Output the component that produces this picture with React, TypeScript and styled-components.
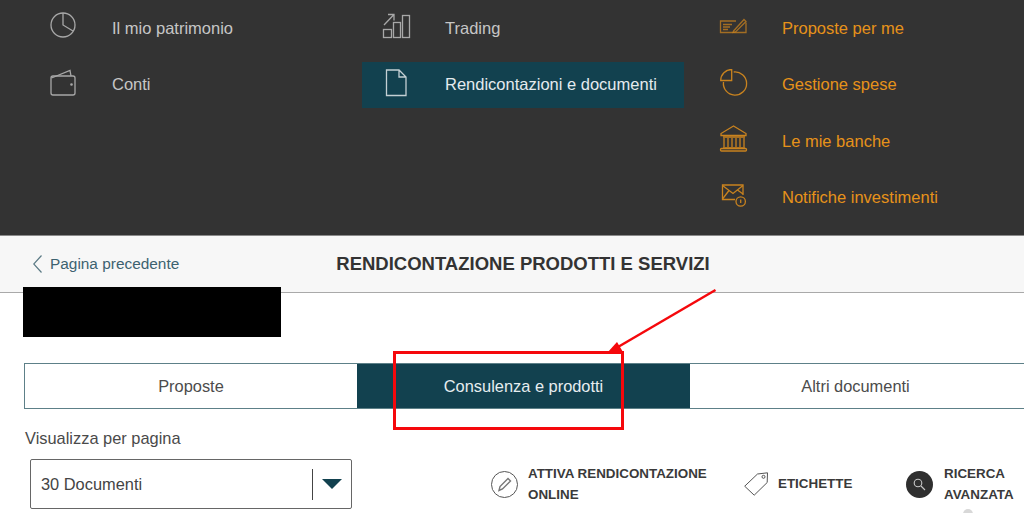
import React from "react";
import styled, { createGlobalStyle } from "styled-components";

const Global = createGlobalStyle`
  html, body { margin: 0; padding: 0; background: #fff; }
  body { font-family: "Liberation Sans", Arial, sans-serif; }
`;

const Page = styled.div`
  position: relative;
  width: 1024px;
  height: 513px;
  overflow: hidden;
  background: #fff;
`;

const MenuPanel = styled.nav`
  display: grid;
  grid-template-columns: 333px 337px 1fr;
  height: 236px;
  box-sizing: border-box;
  padding: 5px 0 0 29px;
  background: #333333;
  border-bottom: 1px solid #8a8a8a;
`;

const MenuColumn = styled.div`
  display: flex;
  flex-direction: column;
  gap: 10.5px;
`;

const MenuRow = styled.a<{ $tone?: "plain" | "active" | "accent" }>`
  display: flex;
  align-items: center;
  gap: 32px;
  width: 322px;
  height: 46px;
  padding-left: 19px;
  box-sizing: border-box;
  font-size: 16.5px;
  color: ${(p) => (p.$tone === "accent" ? "#e6921a" : p.$tone === "active" ? "#e4ebee" : "#c6c6c6")};
  background: ${(p) => (p.$tone === "active" ? "#12414f" : "transparent")};
  svg {
    flex: none;
    display: block;
    fill: none;
    stroke: ${(p) => (p.$tone === "accent" ? "#c9831f" : p.$tone === "active" ? "#c4d0d4" : "#a8a8a8")};
    stroke-width: 1.3;
  }
`;

const SubHeader = styled.header`
  display: grid;
  grid-template-columns: 1fr;
  align-items: center;
  position: relative;
  height: 57px;
  box-sizing: border-box;
  background: #f7f7f7;
  border-bottom: 1px solid #a9a9a9;
`;

const BackLink = styled.a`
  display: flex;
  align-items: center;
  gap: 8px;
  padding-left: 33px;
  font-size: 15.4px;
  color: #3d6270;
  grid-area: 1 / 1;
  svg { display: block; fill: none; stroke: #5b7a85; stroke-width: 1.2; }
`;

const PageTitle = styled.h1`
  grid-area: 1 / 1;
  margin: 0;
  padding-left: 22px;
  text-align: center;
  font-size: 18.5px;
  font-weight: 700;
  color: #333;
`;

const Tabs = styled.div`
  display: grid;
  grid-template-columns: 332px 333px 331px;
  margin: 70px 0 0 24px;
  width: 1003px;
  height: 46px;
  box-sizing: border-box;
  border: 1px solid #5d8088;
`;

const Tab = styled.div<{ $active?: boolean }>`
  display: flex;
  align-items: center;
  justify-content: center;
  font-size: 16.4px;
  color: ${(p) => (p.$active ? "#e6edef" : "#4c4c4c")};
  background: ${(p) => (p.$active ? "#12414f" : "#fff")};
`;

const Controls = styled.section`
  display: flex;
  align-items: flex-end;
  padding-left: 25px;
  margin-top: 20px;
`;

const PageSize = styled.div`
  display: flex;
  flex-direction: column;
  width: 327px;
`;

const FieldLabel = styled.label`
  font-size: 16.4px;
  line-height: 18px;
  color: #4a4a4a;
  margin-bottom: 12px;
`;

const Select = styled.div`
  display: flex;
  align-items: center;
  margin-left: 5px;
  width: 322px;
  height: 50px;
  box-sizing: border-box;
  border: 1px solid #666;
  border-radius: 2px;
  padding-left: 10px;
  font-size: 16.4px;
  color: #444;
`;

const SelectValue = styled.span`
  flex: 1;
`;

const SelectDivider = styled.span`
  width: 1px;
  height: 31px;
  background: #444;
`;

const SelectCaret = styled.span`
  width: 0;
  height: 0;
  margin: 0 9px;
  border-left: 10.5px solid transparent;
  border-right: 10.5px solid transparent;
  border-top: 10px solid #12414f;
`;

const Actions = styled.div`
  display: flex;
  align-items: center;
  height: 50px;
  margin-left: 139px;
`;

const Action = styled.a<{ $width: number; $gap?: number }>`
  display: flex;
  align-items: center;
  gap: ${(p) => p.$gap ?? 10}px;
  width: ${(p) => p.$width}px;
  font-size: 13.4px;
  line-height: 21px;
  font-weight: 700;
  color: #3a3a3a;
  svg { flex: none; display: block; }
  span { margin-top: -1px; }
`;

const Redaction = styled.div`
  position: absolute;
  left: 23px;
  top: 287px;
  width: 258px;
  height: 50px;
  background: #000;
`;

const Highlight = styled.div`
  position: absolute;
  left: 393px;
  top: 351px;
  width: 231px;
  height: 79px;
  box-sizing: border-box;
  border: 3px solid #f5080c;
`;

const Arrow = styled.svg`
  position: absolute;
  left: 600px;
  top: 285px;
  width: 125px;
  height: 75px;
`;

const ScrollHint = styled.div`
  position: absolute;
  left: 963px;
  top: 509px;
  width: 10px;
  height: 10px;
  border-radius: 50%;
  background: #d8d8d8;
`;

const Ic = ({ w = 32, children }: { w?: number; children: React.ReactNode }) => (
  <svg width={w} height={32} viewBox={`0 0 ${w} 32`}>{children}</svg>
);

export default function App() {
  return (
    <Page>
      <Global />
      <MenuPanel>
        <MenuColumn>
          <MenuRow>
            <Ic>
              <circle cx="15" cy="13" r="12" />
              <path d="M15 1V13L25 19" />
            </Ic>
            Il mio patrimonio
          </MenuRow>
          <MenuRow>
            <Ic>
              <rect x="3" y="7" width="24" height="19" rx="2" />
              <path d="M3.5 9L22 1.5L23 7" />
              <circle cx="23.5" cy="15.5" r="0.7" />
            </Ic>
            Conti
          </MenuRow>
        </MenuColumn>
        <MenuColumn>
          <MenuRow>
            <Ic>
              <rect x="2.5" y="17.5" width="8" height="8" />
              <rect x="12.5" y="10.5" width="7" height="15" />
              <rect x="21.5" y="3.5" width="7" height="22" />
              <path d="M3 13L13 2.5M7 2.5H13V8.5" />
            </Ic>
            Trading
          </MenuRow>
          <MenuRow $tone="active">
            <Ic>
              <path d="M5.5 1H18L25 8V26.5H5.5ZM18 1V8H25" />
            </Ic>
            Rendicontazioni e documenti
          </MenuRow>
        </MenuColumn>
        <MenuColumn>
          <MenuRow $tone="accent">
            <Ic>
              <path d="M18 9H2.5V20.5H28V10.5" opacity="0.75" />
              <path d="M5 12.5H14M5 15H12M5 17.5H10" opacity="0.75" />
              <path d="M15.5 19L26 7.5L28 9.5L17.5 20L15 20.5Z" opacity="0.75" />
            </Ic>
            Proposte per me
          </MenuRow>
          <MenuRow $tone="accent">
            <Ic>
              <path d="M13.7 .5V11.5H2.7A11 11 0 0 1 13.7 .5Z" />
              <path d="M15.7 3A11.6 11.6 0 1 1 5.5 13" />
            </Ic>
            Gestione spese
          </MenuRow>
          <MenuRow $tone="accent">
            <Ic>
              <path d="M15.5 1L3 8.5V10.5H28V8.5Z" />
              <path d="M6 13V22M10 13V22M14 13V22M18 13V22M22 13V22M26 13V22" />
              <path d="M5 12H27M5 23H27" />
              <rect x="2.5" y="23.5" width="26" height="2.5" rx="1" />
            </Ic>
            Le mie banche
          </MenuRow>
          <MenuRow $tone="accent">
            <Ic>
              <path d="M17 17.5H4.5V3H25V13" />
              <path d="M4.5 3.5L15 11.5L25 3.5M4.5 17L11 8.5M25 12L19.5 8" />
              <circle cx="22.7" cy="19.5" r="4.7" />
              <path d="M22.7 17.5V21" />
            </Ic>
            Notifiche investimenti
          </MenuRow>
        </MenuColumn>
      </MenuPanel>

      <SubHeader>
        <BackLink>
          <svg width="9" height="18" viewBox="0 0 9 18">
            <path d="M8.5 .5L.7 9L8.5 17.5" />
          </svg>
          Pagina precedente
        </BackLink>
        <PageTitle>RENDICONTAZIONE PRODOTTI E SERVIZI</PageTitle>
      </SubHeader>

      <Tabs>
        <Tab>Proposte</Tab>
        <Tab $active>Consulenza e prodotti</Tab>
        <Tab>Altri documenti</Tab>
      </Tabs>

      <Controls>
        <PageSize>
          <FieldLabel>Visualizza per pagina</FieldLabel>
          <Select>
            <SelectValue>30 Documenti</SelectValue>
            <SelectDivider />
            <SelectCaret />
          </Select>
        </PageSize>
        <Actions>
          <Action $width={253}>
            <svg width="27" height="27" viewBox="0 0 27 27" fill="none" stroke="#555" strokeWidth="1">
              <circle cx="13.5" cy="13.5" r="13" />
              <path d="M8 19.5L9 15.5L17 7.5L19.5 10L11.5 18Z" stroke="#777" strokeWidth="1.4" />
            </svg>
            <span>ATTIVA RENDICONTAZIONE<br />ONLINE</span>
          </Action>
          <Action $width={162}>
            <svg width="24" height="24" viewBox="0 0 24 24" fill="none" stroke="#555" strokeWidth="1">
              <path d="M.7 14.2L13.5 2L23.5 .8L23.2 10.5L10.2 23.2Z" />
              <circle cx="19.5" cy="4.8" r="1.5" />
            </svg>
            <span>ETICHETTE</span>
          </Action>
          <Action $width={118} $gap={11}>
            <svg width="27" height="27" viewBox="0 0 27 27" fill="none" stroke="#c8c8c8" strokeWidth="1.1">
              <circle cx="13.5" cy="13.5" r="13.5" fill="#2f2f2f" stroke="none" />
              <circle cx="12" cy="12" r="3.8" />
              <path d="M15 15L19 19" />
            </svg>
            <span>RICERCA<br />AVANZATA</span>
          </Action>
        </Actions>
      </Controls>

      <ScrollHint />
      <Redaction />
      <Highlight />
      <Arrow viewBox="0 0 125 75">
        <path d="M115.5 5L18 62" stroke="#f5080c" strokeWidth="2.5" fill="none" />
        <path d="M7 68L17 57L23 67Z" fill="#f5080c" />
      </Arrow>
    </Page>
  );
}
